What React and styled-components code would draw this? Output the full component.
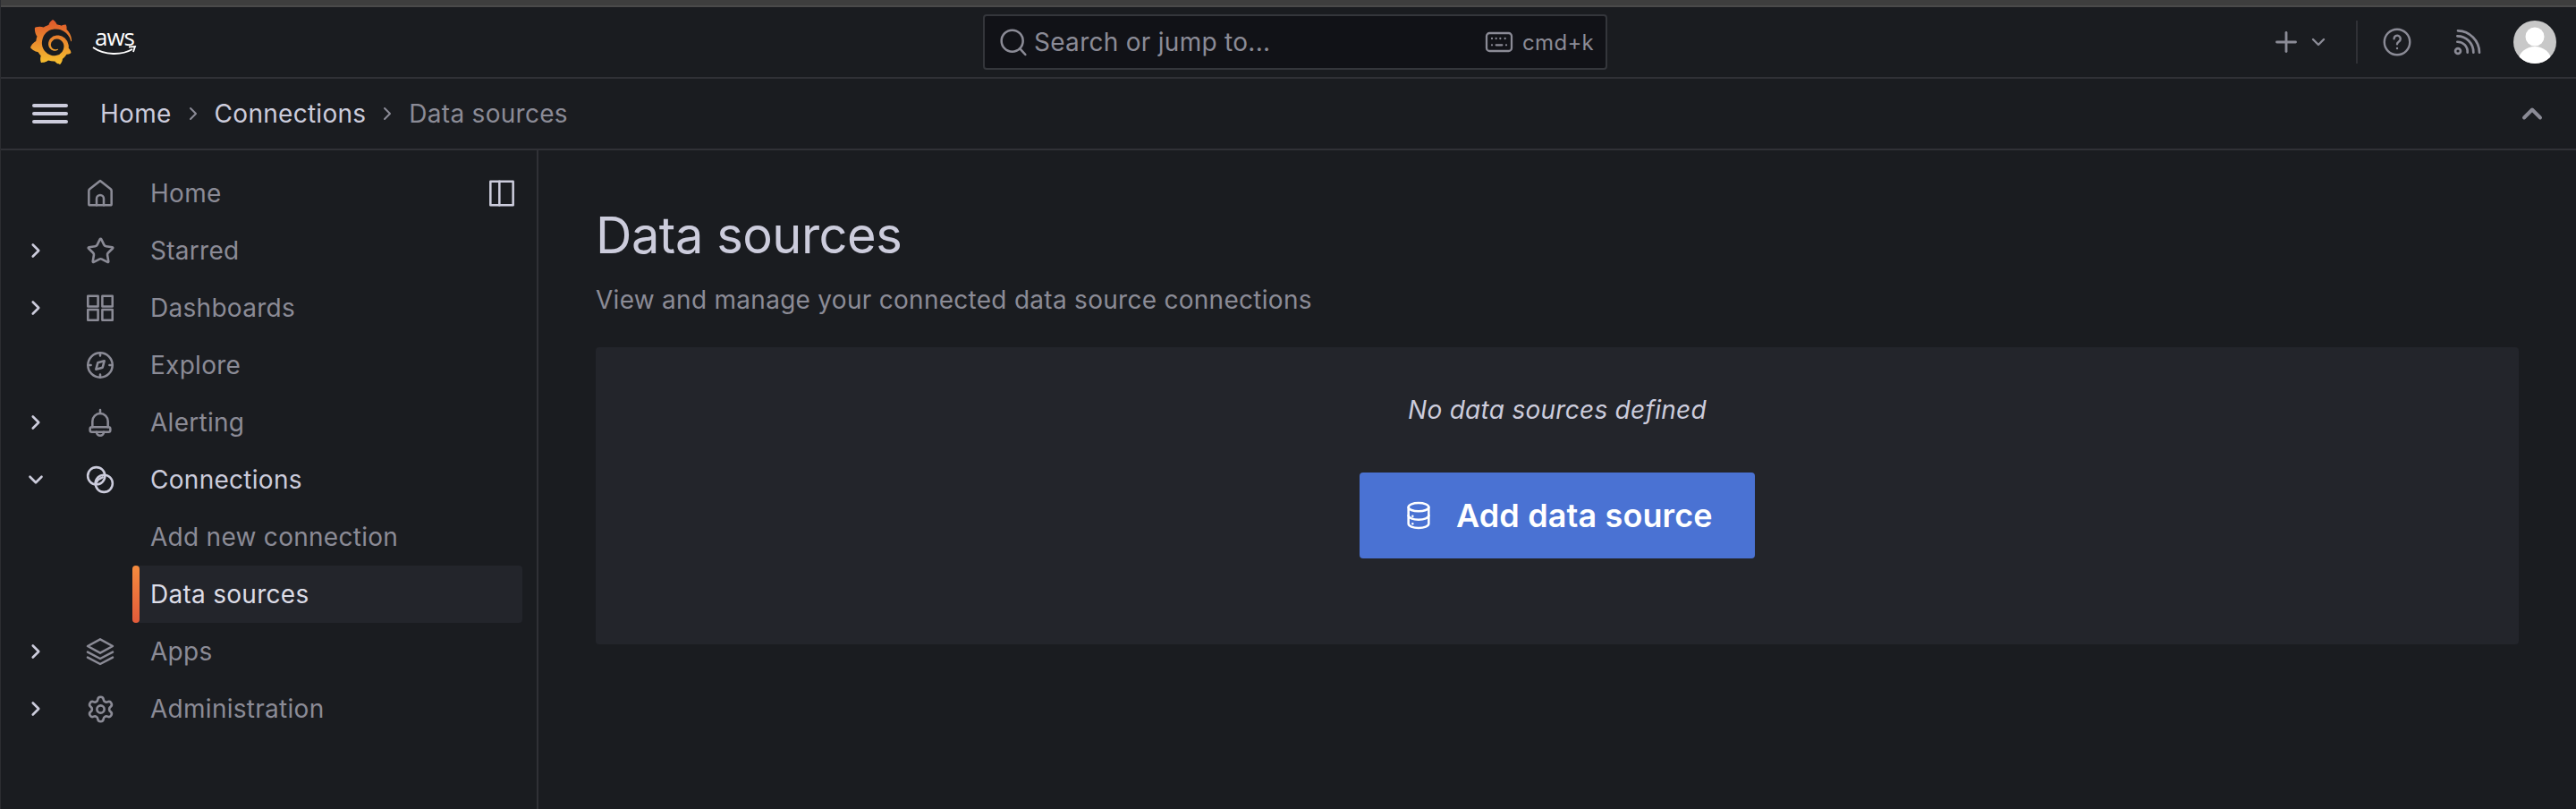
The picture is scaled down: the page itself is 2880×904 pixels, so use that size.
import React from 'react';
import styled, { createGlobalStyle } from 'styled-components';
import { SiGrafana } from 'react-icons/si';
import { Star, Settings, Plus, ChevronDown, ChevronRight, ChevronUp } from 'lucide-react';

const COLORS = {
  bg: '#1a1c20',
  card: '#23252b',
  line: '#303136',
  primary: '#ccccdc',
  secondary: '#8b8b96',
  blue: '#4a72d3',
};

const GlobalStyle = createGlobalStyle`
  html, body { margin: 0; padding: 0; background: ${COLORS.bg}; }
  body { font-family: Inter, "Noto Sans", sans-serif; font-size: 28px; letter-spacing: 0.01em; color: ${COLORS.primary}; }
  * { box-sizing: border-box; }
`;

const Page = styled.div`
  width: 2880px;
  height: 904px;
  display: flex;
  flex-direction: column;
  overflow: hidden;
  background: ${COLORS.bg};
  border-left: 1px solid #2c2d31;
`;

const WindowStrip = styled.div`
  height: 8px;
  flex: none;
  background: #3e3e3e;
  border-bottom: 2px solid #4a4a4a;
`;

const TopBar = styled.header`
  height: 80px;
  flex: none;
  display: grid;
  grid-template-columns: 1098px 698px 1fr;
  border-bottom: 2px solid ${COLORS.line};
`;

const Brand = styled.div`
  display: flex;
  align-items: center;
  padding-left: 31px;
  gap: 22px;
  height: 78px;
`;

const AwsMark = styled.div`
  display: flex;
  flex-direction: column;
  align-items: center;
  width: 48px;
  height: 32px;
  color: #fff;
`;

const AwsText = styled.span`
  font-family: "Open Sans", sans-serif;
  font-size: 26px;
  line-height: 20px;
  letter-spacing: -1px;
`;

const SearchBox = styled.div`
  margin-top: 8px;
  height: 62px;
  display: flex;
  align-items: center;
  padding: 0 13px 0 16px;
  background: #111217;
  border: 2px solid #34363b;
  border-radius: 4px;
  color: ${COLORS.secondary};
`;

const SearchText = styled.span`
  margin-left: 7px;
  flex: 1;
`;

const ShortcutText = styled.span`
  margin-left: 10px;
  font-size: 24px;
`;

const TopActions = styled.div`
  display: flex;
  align-items: center;
  justify-content: flex-end;
  padding-right: 22px;
  height: 78px;
  color: ${COLORS.secondary};
`;

const ActionDivider = styled.div`
  width: 2px;
  height: 48px;
  margin: 0 26px 0 30px;
  background: ${COLORS.line};
`;

const ActionGap = styled.div`
  width: ${p => p.$size}px;
  flex: none;
`;

const BreadcrumbBar = styled.div`
  height: 80px;
  flex: none;
  display: flex;
  align-items: center;
  padding: 0 31px 0 35px;
  border-bottom: 2px solid ${COLORS.line};
`;

const Hamburger = styled.div`
  width: 40px;
  height: 22px;
  margin-right: 36px;
  display: flex;
  flex-direction: column;
  justify-content: space-between;
  span {
    display: block;
    height: 4px;
    border-radius: 2px;
    background: ${COLORS.primary};
  }
`;

const Crumb = styled.span`
  color: ${p => (p.$current ? COLORS.secondary : COLORS.primary)};
`;

const CrumbSeparator = styled.span`
  display: flex;
  width: 48px;
  justify-content: center;
  color: ${COLORS.secondary};
`;

const CollapseButton = styled.div`
  display: flex;
  margin-left: auto;
  color: ${COLORS.secondary};
`;

const Body = styled.div`
  flex: 1;
  display: flex;
  min-height: 0;
`;

const Sidebar = styled.nav`
  width: 601px;
  flex: none;
  padding: 16px 0 0;
  border-right: 2px solid ${COLORS.line};
`;

const NavRow = styled.div`
  height: 64px;
  display: flex;
  align-items: center;
  color: ${p => (p.$open ? COLORS.primary : COLORS.secondary)};
`;

const ChevronSlot = styled.div`
  width: 78px;
  display: flex;
  justify-content: center;
  color: ${COLORS.primary};
`;

const IconSlot = styled.div`
  width: 66px;
  display: flex;
  justify-content: center;
`;

const NavLabel = styled.span`
  margin-left: 23px;
`;

const DockButton = styled.div`
  display: flex;
  margin-left: auto;
  margin-right: 23px;
  color: ${COLORS.primary};
`;

const SubRow = styled.div`
  position: relative;
  height: 64px;
  margin-left: 147px;
  width: 436px;
  padding-left: 20px;
  display: flex;
  align-items: center;
  border-radius: 4px;
  background: ${p => (p.$active ? COLORS.card : 'transparent')};
  color: ${p => (p.$active ? '#dcdce6' : COLORS.secondary)};
  ${p => p.$active && `
    &::before {
      content: '';
      position: absolute;
      left: 0;
      top: 0;
      bottom: 0;
      width: 8px;
      border-radius: 4px;
      background: linear-gradient(#f58b3e, #e35b3a);
    }
  `}
`;

const Main = styled.main`
  flex: 1;
  padding: 61px 64px 0 64px;
`;

const Title = styled.h1`
  margin: 0;
  font-size: 56px;
  line-height: 68px;
  font-weight: 400;
  letter-spacing: -0.5px;
  color: ${COLORS.primary};
`;

const Subtitle = styled.p`
  margin: 18px 0 33px;
  line-height: 40px;
  color: ${COLORS.secondary};
`;

const EmptyCard = styled.section`
  height: 332px;
  padding-top: 50px;
  display: flex;
  flex-direction: column;
  align-items: center;
  border-radius: 4px;
  background: ${COLORS.card};
`;

const EmptyText = styled.em`
  line-height: 40px;
  color: ${COLORS.primary};
`;

const AddButton = styled.button`
  margin-top: 50px;
  width: 442px;
  height: 96px;
  padding: 0 0 0 50px;
  display: flex;
  align-items: center;
  gap: 26px;
  border: 0;
  border-radius: 4px;
  background: ${COLORS.blue};
  color: #fff;
  font: 600 36px Inter, sans-serif;
  letter-spacing: 0.12px;
`;

const Svg = styled.svg`
  flex: none;
  fill: none;
  stroke: currentColor;
  stroke-width: ${p => p.$weight || 1.9};
  stroke-linecap: round;
  stroke-linejoin: round;
`;

const Icon = ({ size = 32, weight, children }) => (
  <Svg width={size} height={size} viewBox="0 0 24 24" $weight={weight}>{children}</Svg>
);

const HomeIcon = () => (
  <Icon>
    <path d="M3.500 22h17a1 1 0 0 0 1-1V10a2 2 0 0 0-.7-1.500L12 1.500 3.200 8.500A2 2 0 0 0 2.500 10v11a1 1 0 0 0 1 1z" />
    <path d="M9 22v-5.500a3 3 0 0 1 6 0V22" />
  </Icon>
);
const GridIcon = () => (
  <Icon>
    <rect x="1.700" y="2" width="8.500" height="8.800" />
    <rect x="13.800" y="2" width="8.500" height="8.800" />
    <rect x="1.700" y="13.500" width="8.500" height="8.800" />
    <rect x="13.800" y="13.500" width="8.500" height="8.800" />
  </Icon>
);
const CompassIcon = () => (
  <Icon>
    <circle cx="12" cy="12" r="10.300" />
    <path d="M12 1.700v2.500M12 19.800v2.500M1.700 12h2.500M19.800 12h2.500" />
    <path d="M15.500 8.500l-1.500 5.500-5.500 1.500 1.500-5.500z" />
  </Icon>
);
const BellIcon = () => (
  <Icon>
    <path d="M5.500 16v-5a6.500 6.500 0 0 1 13 0v5" />
    <path d="M12 1.500v3" />
    <rect x="3.500" y="16" width="17" height="4" rx="1.500" />
    <path d="M9 20a3 3 0 0 0 6 0" />
  </Icon>
);
const LinkRingsIcon = () => (
  <Icon>
    <circle cx="8.800" cy="8.800" r="7.200" />
    <circle cx="15.200" cy="15.200" r="7.200" />
    <path d="M9 14c1-2 2.500-3 5-4" />
  </Icon>
);
const LayersIcon = () => (
  <Icon>
    <path d="M12 1.700L22.500 7.500 12 13.300 1.500 7.500z" />
    <path d="M1.500 12.500L12 18l10.500-5.500" />
    <path d="M1.500 17L12 22.500 22.500 17" />
  </Icon>
);
const PanelIcon = () => (
  <Icon>
    <rect x="2.500" y="2" width="19" height="20" />
    <path d="M10 2v20" />
  </Icon>
);
const SearchIcon = () => (
  <Icon>
    <circle cx="11" cy="11" r="9" />
    <path d="M17.500 17.500L22 22.500" />
  </Icon>
);
const KeyboardIcon = () => (
  <Icon size={32} weight={1.7}>
    <rect x="1.500" y="4.500" width="21" height="15" rx="2.500" />
    <path d="M6 9h.01M9.500 9h.01M13 9h.01M17 9h.01M6 14.500h.01M9.500 14.500h5M18 14.500h.01" />
  </Icon>
);
const HelpIcon = () => (
  <Icon size={36} weight={1.600}>
    <circle cx="12" cy="12" r="9.500" />
    <path d="M9.700 9.500a2.400 2.400 0 1 1 3.600 2.100c-.8.500-1.300 1-1.300 1.900" />
    <path d="M12 16.700h.01" />
  </Icon>
);
const RssIcon = () => (
  <Icon size={32} weight={2}>
    <circle cx="4.500" cy="19.500" r="2.200" />
    <path d="M4 11.800a8.300 8.300 0 0 1 8.500 9" />
    <path d="M4 7a13.500 13.500 0 0 1 13.500 13.800" />
    <path d="M4.500 2.500a18.500 18.500 0 0 1 18 18.300" />
  </Icon>
);
const DatabaseIcon = () => (
  <Icon>
    <ellipse cx="12" cy="5" rx="8.500" ry="3.500" />
    <path d="M3.500 5v14c0 2 3.800 3.500 8.500 3.500s8.500-1.500 8.500-3.500V5" />
    <path d="M3.500 12c0 2 3.800 3.500 8.500 3.500s8.500-1.500 8.500-3.500" />
    <path d="M7 12.500h.01M7 19h.01" />
  </Icon>
);
const Avatar = () => (
  <svg width="48" height="48" viewBox="0 0 48 48">
    <clipPath id="avatarClip"><circle cx="24" cy="24" r="24" /></clipPath>
    <g clipPath="url(#avatarClip)">
      <rect width="48" height="48" fill="#c8c8c8" />
      <circle cx="24" cy="18" r="10.500" fill="#fff" />
      <ellipse cx="24" cy="44" rx="18" ry="15" fill="#fff" />
    </g>
  </svg>
);
const AwsSmile = () => (
  <svg width="50" height="12" viewBox="0 0 50 12">
    <path d="M1 2c13 9 32 9 44 2" fill="none" stroke="#fff" strokeWidth="2" />
    <path d="M41 1.500l7-.5-2 6" fill="none" stroke="#fff" strokeWidth="1.800" />
  </svg>
);

const NAV = [
  { label: 'Home', icon: <HomeIcon />, dock: true },
  { label: 'Starred', icon: <Star size={33} strokeWidth={1.9} />, more: true },
  { label: 'Dashboards', icon: <GridIcon />, more: true },
  { label: 'Explore', icon: <CompassIcon /> },
  { label: 'Alerting', icon: <BellIcon />, more: true },
  { label: 'Connections', icon: <LinkRingsIcon />, open: true },
];

const NAV_AFTER = [
  { label: 'Apps', icon: <LayersIcon />, more: true },
  { label: 'Administration', icon: <Settings size={33} strokeWidth={1.9} />, more: true },
];

const NavItem = ({ item }) => (
  <NavRow $open={item.open}>
    <ChevronSlot>
      {item.more && <ChevronRight size={26} strokeWidth={2.4} />}
      {item.open && <ChevronDown size={26} strokeWidth={2.4} />}
    </ChevronSlot>
    <IconSlot>{item.icon}</IconSlot>
    <NavLabel>{item.label}</NavLabel>
    {item.dock && <DockButton><PanelIcon /></DockButton>}
  </NavRow>
);

export default function App() {
  return (
    <Page>
      <GlobalStyle />
      <WindowStrip />
      <TopBar>
        <Brand>
          <svg width="0" height="0" style={{ position: 'absolute' }}>
            <linearGradient id="grafanaFill" x1="0" y1="0" x2="0" y2="1">
              <stop offset="0" stopColor="#df562b" />
              <stop offset="1" stopColor="#f6c12f" />
            </linearGradient>
          </svg>
          <SiGrafana size={50} fill="url(#grafanaFill)" />
          <AwsMark>
            <AwsText>aws</AwsText>
            <AwsSmile />
          </AwsMark>
        </Brand>
        <SearchBox>
          <SearchIcon />
          <SearchText>Search or jump to...</SearchText>
          <KeyboardIcon />
          <ShortcutText>cmd+k</ShortcutText>
        </SearchBox>
        <TopActions>
          <Plus size={36} strokeWidth={1.9} />
          <ActionGap $size={6} />
          <ChevronDown size={24} strokeWidth={2.4} />
          <ActionDivider />
          <HelpIcon />
          <ActionGap $size={44} />
          <RssIcon />
          <ActionGap $size={36} />
          <Avatar />
        </TopActions>
      </TopBar>
      <BreadcrumbBar>
        <Hamburger><span /><span /><span /></Hamburger>
        <Crumb>Home</Crumb>
        <CrumbSeparator><ChevronRight size={24} strokeWidth={2} /></CrumbSeparator>
        <Crumb>Connections</Crumb>
        <CrumbSeparator><ChevronRight size={24} strokeWidth={2} /></CrumbSeparator>
        <Crumb $current>Data sources</Crumb>
        <CollapseButton><ChevronUp size={36} strokeWidth={2.6} /></CollapseButton>
      </BreadcrumbBar>
      <Body>
        <Sidebar>
          {NAV.map(item => <NavItem key={item.label} item={item} />)}
          <SubRow>Add new connection</SubRow>
          <SubRow $active>Data sources</SubRow>
          {NAV_AFTER.map(item => <NavItem key={item.label} item={item} />)}
        </Sidebar>
        <Main>
          <Title>Data sources</Title>
          <Subtitle>View and manage your connected data source connections</Subtitle>
          <EmptyCard>
            <EmptyText>No data sources defined</EmptyText>
            <AddButton>
              <DatabaseIcon />
              Add data source
            </AddButton>
          </EmptyCard>
        </Main>
      </Body>
    </Page>
  );
}
